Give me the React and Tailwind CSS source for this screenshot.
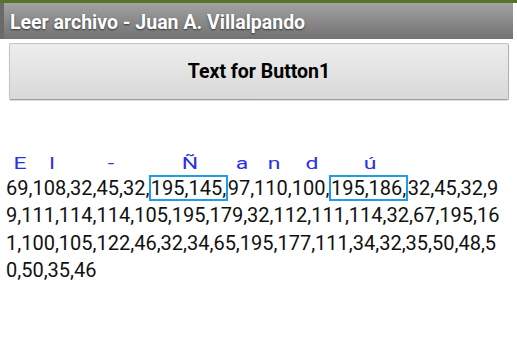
import React from "react";

function Tok({ children, letter }) {
  return (
    <span className="relative">
      {children}
      <span className="absolute left-[calc(50%+3px)] top-[-21px] -translate-x-1/2 scale-x-[1.35] text-[17px] leading-[17px] text-[#2e2ee6]">
        {letter}
      </span>
    </span>
  );
}

function Box({ children, letter }) {
  return (
    <span className="relative px-[1.5px]">
      {children}
      <span className="absolute left-0 right-0 top-[-1px] bottom-[-1px] border-2 border-[#1e9ee8]" />
      <span className="absolute left-[calc(50%+1px)] top-[-21px] -translate-x-1/2 scale-x-[1.35] text-[17px] leading-[17px] text-[#2e2ee6]">
        {letter}
      </span>
    </span>
  );
}

export default function App() {
  return (
    <div className="w-[517px] h-[342px] bg-white overflow-hidden" style={{ fontFamily: "Roboto, 'Liberation Sans', sans-serif" }}>
      <div className="h-[3px] bg-[#577428]" />
      <div className="h-[36px] mr-[4px] flex items-center pt-[3px] pl-[6px] border-l-4 border-[#6a6a6a] bg-gradient-to-b from-[#a2a2a2] to-[#727272]">
        <span className="text-white font-bold text-[19.5px] leading-none [text-shadow:0_1px_2px_rgba(0,0,0,0.6)]">
          Leer archivo - Juan A. Villalpando
        </span>
      </div>
      <div className="mt-[4px] ml-[9px] mr-[8px] h-[57px] flex items-center justify-center rounded-[2px] border border-[#c4c4c4] border-b-[#9e9e9e] border-r-[#b0b0b0] bg-gradient-to-b from-[#ededed] to-[#d9d9d9] shadow-[0_1px_1px_rgba(0,0,0,0.15)]">
        <span className="text-black font-bold text-[19.5px] leading-none">Text for Button1</span>
      </div>
      <div className="mt-[75px] ml-[6px] text-[20px] leading-[27.4px] text-[#111] whitespace-nowrap">
        <div>
          <Tok letter="E">69</Tok>,<Tok letter="l">108</Tok>,32,<Tok letter="-">45</Tok>,32,<Box letter="Ñ">195,145,</Box><Tok letter="a">97</Tok>,<Tok letter="n">110</Tok>,<Tok letter="d">100</Tok>,<Box letter="ú">195,186,</Box>32,45,32,9
        </div>
        <div>9,111,114,114,105,195,179,32,112,111,114,32,67,195,16</div>
        <div>1,100,105,122,46,32,34,65,195,177,111,34,32,35,50,48,5</div>
        <div>0,50,35,46</div>
      </div>
    </div>
  );
}
